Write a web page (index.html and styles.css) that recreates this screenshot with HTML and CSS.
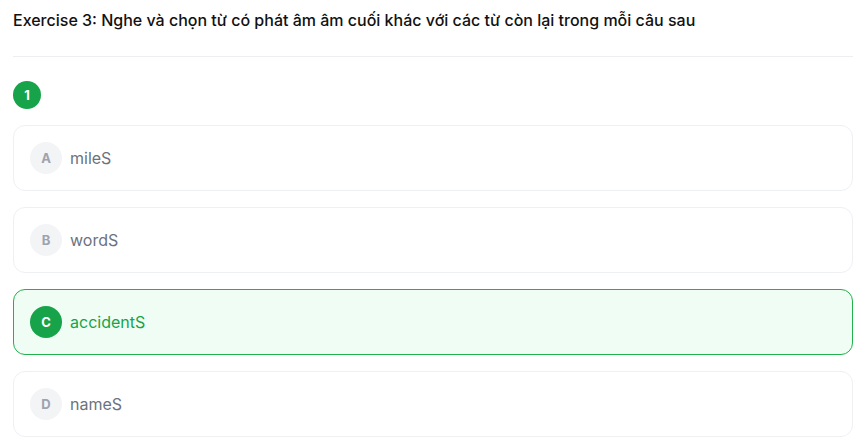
FILE: index.html
```html
<!DOCTYPE html>
<html lang="vi">
<head>
<meta charset="utf-8">
<link rel="stylesheet" href="styles.css">
</head>
<body>
<div class="page">
  <h1 class="title">Exercise 3: Nghe và chọn từ có phát âm âm cuối khác với các từ còn lại trong mỗi câu sau</h1>
  <div class="question">
    <div class="qnum">1</div>
    <div class="options">
      <div class="option"><span class="letter">A</span><span class="text">mileS</span></div>
      <div class="option"><span class="letter">B</span><span class="text">wordS</span></div>
      <div class="option selected"><span class="letter">C</span><span class="text">accidentS</span></div>
      <div class="option"><span class="letter">D</span><span class="text">nameS</span></div>
    </div>
  </div>
</div>
</body>
</html>
```
FILE: styles.css
```css
* { box-sizing: border-box; }
body {
  margin: 0;
  background: #ffffff;
  font-family: Inter, "Noto Sans", sans-serif;
}
.page {
  padding: 9px 15px 0 13px;
}
.title {
  margin: 0;
  font-size: 16px;
  line-height: 22px;
  font-weight: 500;
  color: #111111;
  padding-bottom: 25px;
  border-bottom: 1px solid #eceef2;
}
.question {
  padding-top: 24px;
}
.qnum {
  width: 28px;
  height: 28px;
  border-radius: 50%;
  background: #16a34a;
  color: #fff;
  font-size: 13px;
  font-weight: 700;
  display: flex;
  align-items: center;
  justify-content: center;
  margin-bottom: 16px;
}
.options {
  display: flex;
  flex-direction: column;
  gap: 16px;
}
.option {
  display: flex;
  align-items: center;
  gap: 8px;
  padding: 16px;
  border: 1px solid #eef0f4;
  border-radius: 12px;
  background: #fff;
}
.letter {
  width: 32px;
  height: 32px;
  border-radius: 50%;
  background: #f3f4f6;
  color: #9ca3af;
  font-size: 13px;
  font-weight: 700;
  display: flex;
  align-items: center;
  justify-content: center;
}
.text {
  font-size: 16px;
  color: #6b7280;
}
.option.selected {
  border-color: #22b14c;
  background: #f0fdf4;
}
.option.selected .letter {
  background: #16a34a;
  color: #fff;
}
.option.selected .text {
  color: #16a34a;
}
```
